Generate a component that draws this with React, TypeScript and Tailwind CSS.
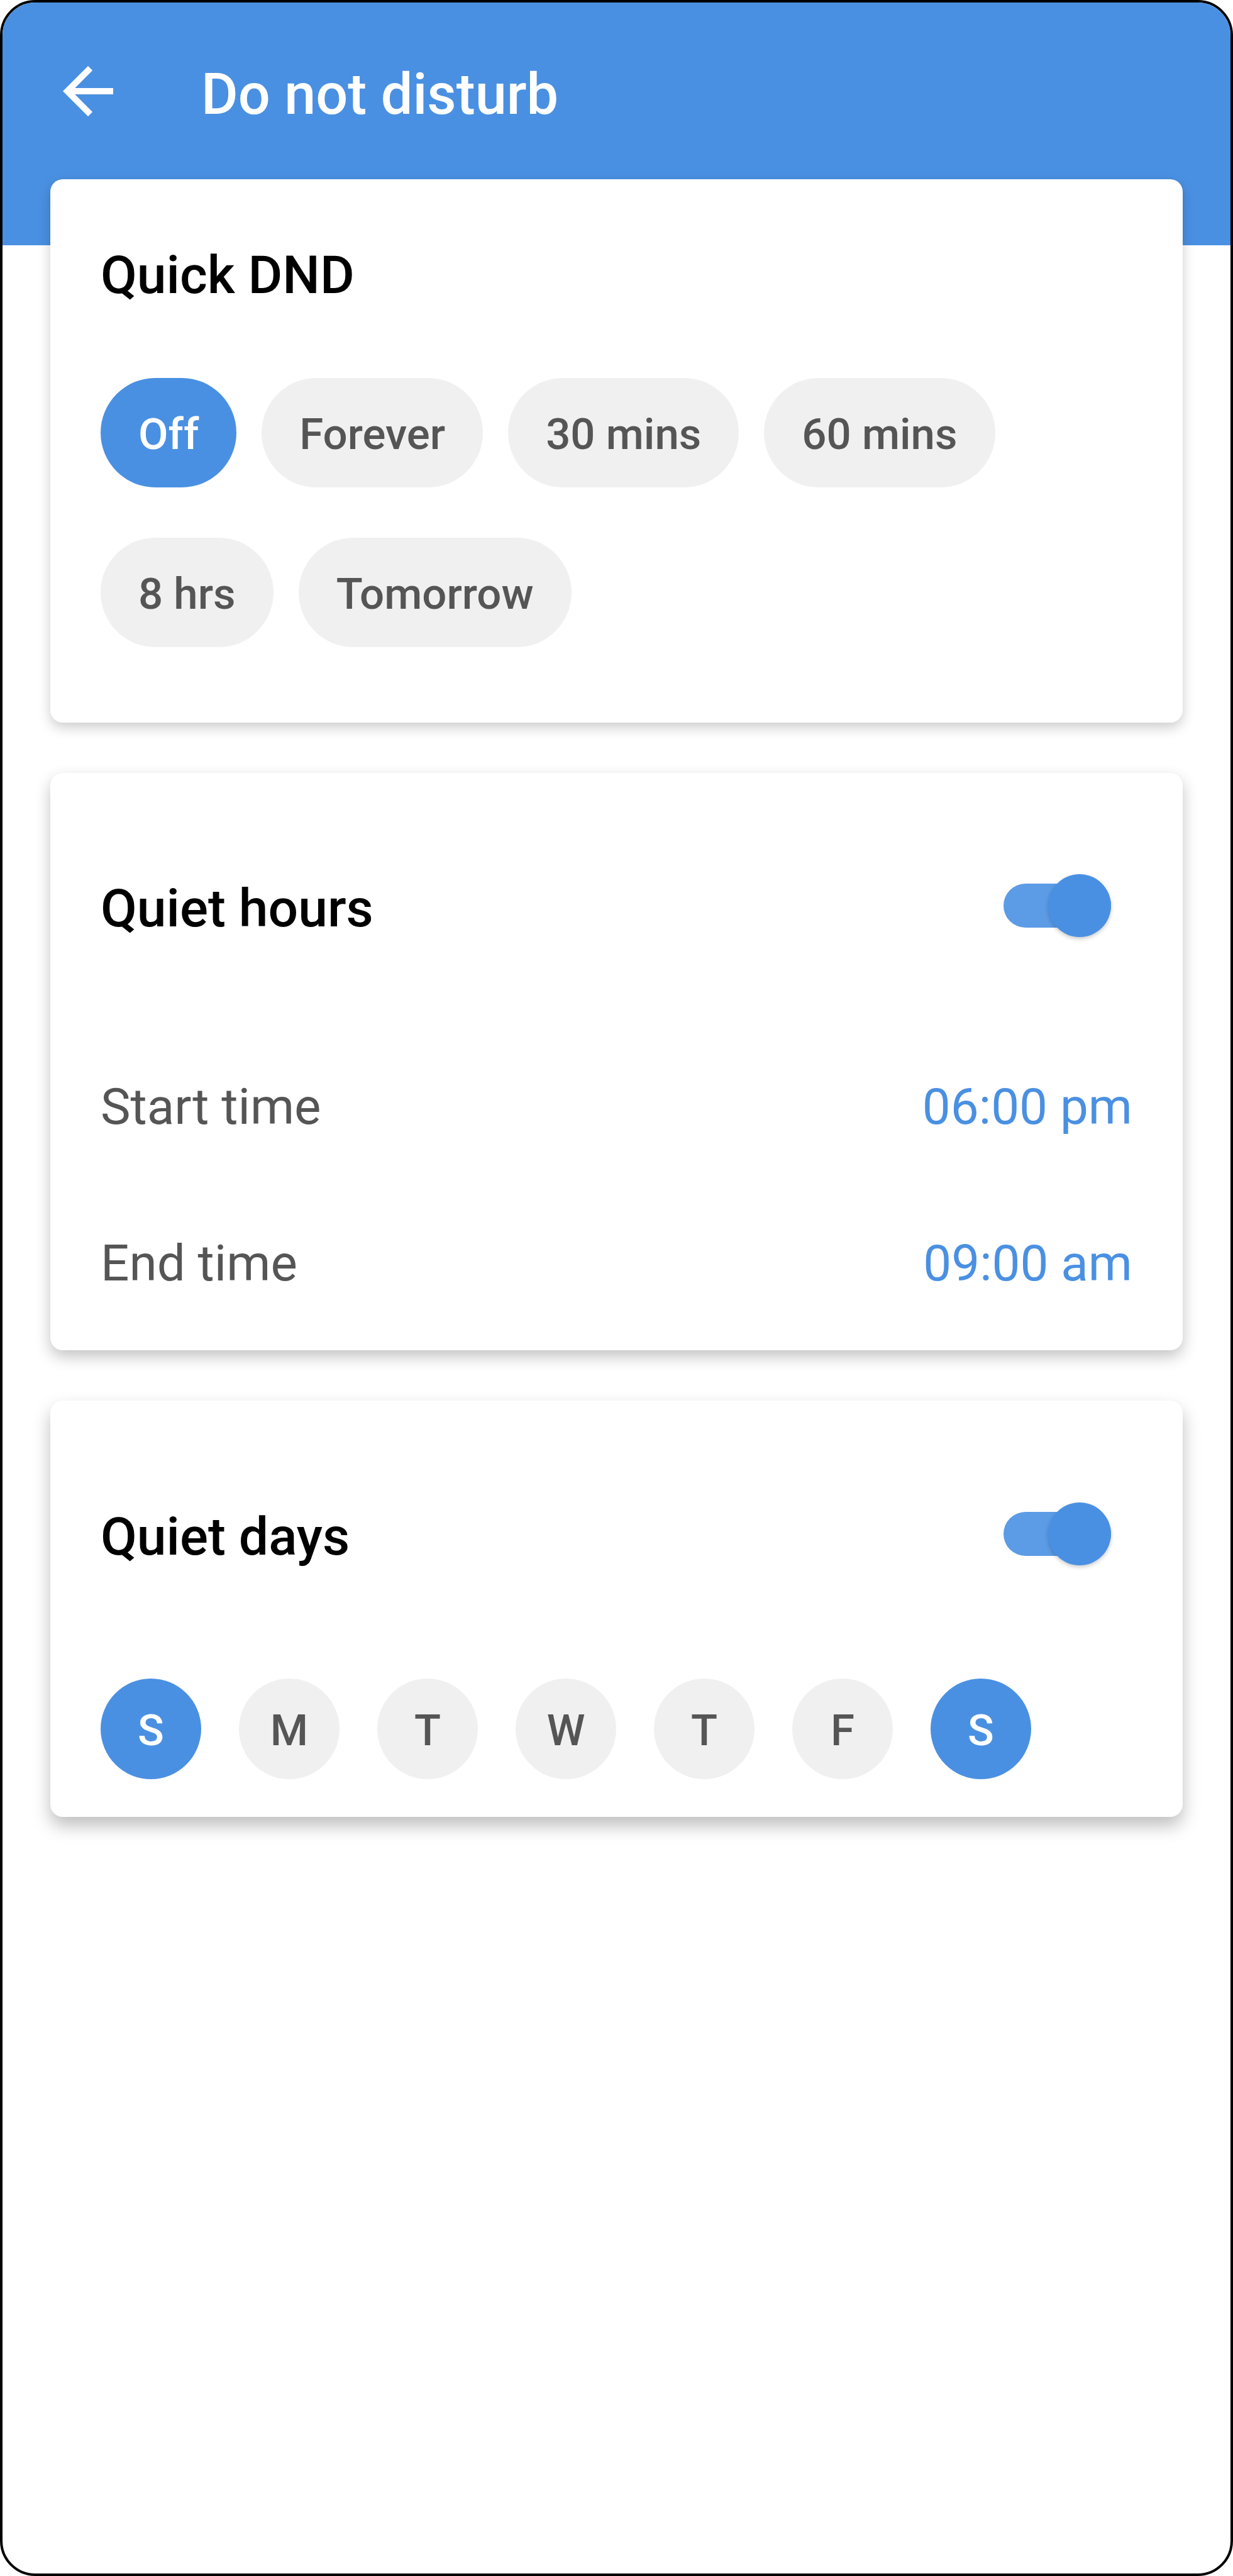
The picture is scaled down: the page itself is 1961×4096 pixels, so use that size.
import { useState } from 'react';
import type { ReactNode } from 'react';
import clsx from 'clsx';
import { MdArrowBack } from 'react-icons/md';

const DURATIONS = ['Off', 'Forever', '30 mins', '60 mins', '8 hrs', 'Tomorrow'];

const DAYS = [
    { name: 'Sunday', letter: 'S' },
    { name: 'Monday', letter: 'M' },
    { name: 'Tuesday', letter: 'T' },
    { name: 'Wednesday', letter: 'W' },
    { name: 'Thursday', letter: 'T' },
    { name: 'Friday', letter: 'F' },
    { name: 'Saturday', letter: 'S' },
];

interface CardProps {
    className?: string;
    children: ReactNode;
}

function Card({ className, children }: CardProps) {
    return (
        <section className={clsx('rounded-[20px] bg-white px-[80px]', className)}>
            {children}
        </section>
    );
}

interface SwitchHeadingProps {
    id: string;
    title: string;
    checked: boolean;
    onChange: (checked: boolean) => void;
}

function SwitchHeading({ id, title, checked, onChange }: SwitchHeadingProps) {
    return (
        <div className="flex items-start justify-between pr-[34px]">
            <h2 className="text-[84px] leading-[110px] font-medium text-black">
                <label htmlFor={id}>{title}</label>
            </h2>
            <label
                htmlFor={id}
                className="flex h-[100px] w-[171px] cursor-pointer items-center"
            >
                <input
                    id={id}
                    type="checkbox"
                    role="switch"
                    className="sr-only"
                    checked={checked}
                    onChange={(e) => onChange(e.target.checked)}
                />
                <span
                    className={clsx(
                        'flex h-[70px] w-full items-center rounded-full',
                        checked ? 'justify-end bg-[#5c9be6]' : 'justify-start bg-[#b9b9b9]',
                    )}
                >
                    <span
                        className={clsx(
                            'size-[100px] shrink-0 rounded-full shadow-[0_3px_6px_rgba(0,0,0,0.2)]',
                            checked ? 'bg-[#4a90e2]' : 'bg-[#f0f0f0]',
                        )}
                    />
                </span>
            </label>
        </div>
    );
}

function TimeRow({ id, label, value }: { id: string; label: string; value: string }) {
    return (
        <div className="flex items-center justify-between text-[80px] leading-[100px]">
            <label htmlFor={id} className="text-[#555555]">
                {label}
            </label>
            <button id={id} type="button" className="cursor-pointer text-[#4a90e2]">
                {value}
            </button>
        </div>
    );
}

export default function App() {
    const [duration, setDuration] = useState('Off');
    const [hoursOn, setHoursOn] = useState(true);
    const [daysOn, setDaysOn] = useState(true);
    const [days, setDays] = useState(['Sunday', 'Saturday']);

    const toggleDay = (name: string) =>
        setDays((prev) =>
            prev.includes(name) ? prev.filter((d) => d !== name) : [...prev, name],
        );

    return (
        <div className="min-h-screen overflow-hidden rounded-[56px] border-4 border-black bg-white font-['Roboto',sans-serif]">
            <header className="h-[386px] bg-[#4a90e2] px-[76px] pt-[81px] text-white">
                <div className="flex items-end gap-[120px]">
                    <button type="button" aria-label="Back" className="cursor-pointer">
                        <MdArrowBack className="size-[120px]" />
                    </button>
                    <h1 className="text-[90px] leading-[108px] font-medium">Do not disturb</h1>
                </div>
            </header>

            <main className="-mt-[105px] flex flex-col gap-[80px] px-[76px] pb-[80px]">
                <Card className="pt-[98px] pb-[120px] shadow-[0_8px_20px_rgba(0,0,0,0.2)]">
                    <h2 className="text-[84px] leading-[110px] font-medium text-black">
                        Quick DND
                    </h2>
                    <div className="mt-[108px] flex max-w-[1560px] flex-wrap gap-x-[40px] gap-y-[80px]">
                        {DURATIONS.map((item) => (
                            <button
                                key={item}
                                type="button"
                                aria-pressed={duration === item}
                                onClick={() => setDuration(item)}
                                className={clsx(
                                    'h-[174px] cursor-pointer rounded-full px-[60px] pt-[6px] text-[69px] font-medium',
                                    duration === item
                                        ? 'bg-[#4a90e2] text-white'
                                        : 'bg-[#f0f0f0] text-[#555555]',
                                )}
                            >
                                {item}
                            </button>
                        ))}
                    </div>
                </Card>

                <Card className="pt-[161px] pb-[88px] shadow-[0_10px_24px_rgba(0,0,0,0.24)]">
                    <SwitchHeading
                        id="quiet-hours"
                        title="Quiet hours"
                        checked={hoursOn}
                        onChange={setHoursOn}
                    />
                    <div className="mt-[210px] flex flex-col gap-[149px]">
                        <TimeRow id="start-time" label="Start time" value="06:00 pm" />
                        <TimeRow id="end-time" label="End time" value="09:00 am" />
                    </div>
                </Card>

                <Card className="pt-[162px] pb-[60px] shadow-[0_14px_28px_rgba(0,0,0,0.26)]">
                    <SwitchHeading
                        id="quiet-days"
                        title="Quiet days"
                        checked={daysOn}
                        onChange={setDaysOn}
                    />
                    <div className="mt-[170px] flex gap-[60px]">
                        {DAYS.map(({ name, letter }) => (
                            <button
                                key={name}
                                type="button"
                                aria-label={name}
                                aria-pressed={days.includes(name)}
                                onClick={() => toggleDay(name)}
                                className={clsx(
                                    'size-[160px] cursor-pointer rounded-full pt-[6px] text-[69px] font-medium',
                                    days.includes(name)
                                        ? 'bg-[#4a90e2] text-white'
                                        : 'bg-[#f0f0f0] text-[#555555]',
                                )}
                            >
                                {letter}
                            </button>
                        ))}
                    </div>
                </Card>
            </main>
        </div>
    );
}
